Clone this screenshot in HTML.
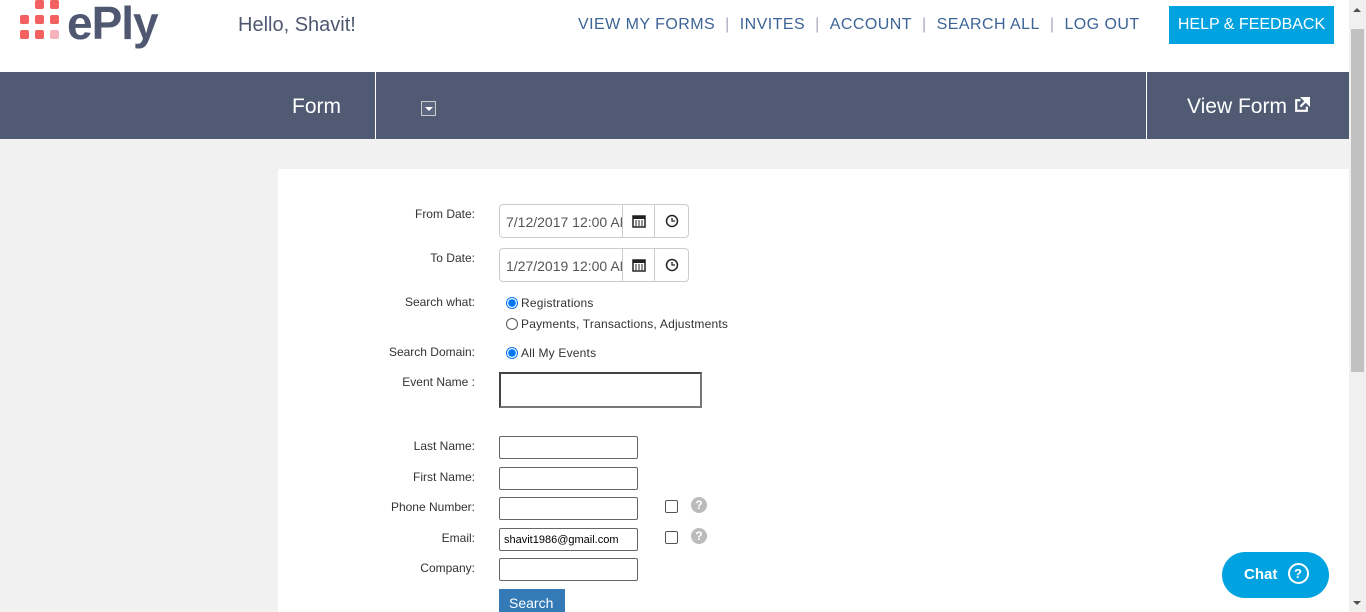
<!DOCTYPE html>
<html style="overflow:hidden;height:612px"><head><meta charset="utf-8"><style>
*{box-sizing:border-box;margin:0;padding:0}
body{width:1366px;height:612px;overflow:hidden;background:#f0f1f0;font-family:"Liberation Sans",sans-serif;position:relative}
.top{position:absolute;left:0;top:0;width:1349px;height:72px;background:#fff}
.dot{position:absolute;width:9px;height:9px;border-radius:2px;background:#f26060}
.logo{position:absolute;left:67px;top:-4px;font-size:46px;font-weight:bold;color:#4f5870;letter-spacing:-1px}
.hello{position:absolute;left:238px;top:14px;font-size:20px;color:#4f5870}
.nav{position:absolute;top:16px;left:578px;font-size:16px;color:#3d6497;letter-spacing:.45px;white-space:nowrap}
.nav span.s{color:#aab;margin:0 10px}
.help{position:absolute;left:1169px;top:6px;width:165px;height:38px;background:#00a2df;color:#fff;font-size:16px;text-align:center;line-height:38px}
.bar{position:absolute;left:0;top:72px;width:1349px;height:67px;background:#505a72;color:#fff}
.bar .t{position:absolute;font-size:21px;top:23px}
.vl{position:absolute;top:0;width:1px;height:67px;background:#fff}
.panel{position:absolute;left:278px;top:169px;width:1071px;height:443px;background:#fff}
.lbl{position:absolute;font-size:12px;color:#333;text-align:right;width:200px;left:275px}
.inp{position:absolute;left:499px;width:139px;height:23px;border:1px solid #666;border-radius:2px;background:#fff;font-size:11px;padding:5px 4px;color:#000}
.dt{position:absolute;left:499px;width:190px;height:34px;border:1px solid #ccc;border-radius:4px;display:flex}
.dt .v{width:124px;border-right:1px solid #ccc;font-size:14px;color:#555;padding:9px 6px;white-space:nowrap;overflow:hidden}
.dt .b{width:33px;border-right:1px solid #ccc;display:flex;align-items:center;justify-content:center}
.dt .b:last-child{border:none}
.rad{position:absolute;left:506px;font-size:12px;color:#333;display:flex;align-items:center;letter-spacing:.2px}
.rad i{display:inline-block;width:12px;height:12px;border-radius:50%;border:1px solid #555;margin-right:3px}
.rad i.on{border:1px solid #0075ff;background:radial-gradient(circle,#0075ff 0 3.5px,#fff 4px)}
.cb{position:absolute;left:665px;width:13px;height:13px;border:1px solid #555;border-radius:2px}
.q{position:absolute;left:691px;width:16px;height:16px;border-radius:50%;background:#bbb;color:#fff;font-size:12px;font-weight:bold;text-align:center;line-height:16px}
.sb{position:absolute;right:0;top:0;width:17px;height:612px;background:#f0f0f0}
</style></head><body>
<div class="top">
<div class="dot" style="left:35px;top:0"></div><div class="dot" style="left:50px;top:0"></div>
<div class="dot" style="left:20px;top:15px"></div><div class="dot" style="left:35px;top:15px"></div><div class="dot" style="left:50px;top:15px"></div>
<div class="dot" style="left:20px;top:30px"></div><div class="dot" style="left:35px;top:30px"></div><div class="dot" style="left:50px;top:30px;background:#f7b3bb"></div>
<div class="logo">ePly</div>
<div class="hello">Hello, Shavit!</div>
<div class="nav">VIEW MY FORMS<span class="s">|</span>INVITES<span class="s">|</span>ACCOUNT<span class="s">|</span>SEARCH ALL<span class="s">|</span>LOG OUT</div>
<div class="help">HELP &amp; FEEDBACK</div>
</div>
<div class="bar">
<div class="t" style="left:292px">Form</div>
<div class="vl" style="left:375px"></div>
<div style="position:absolute;left:421px;top:29px;width:15px;height:15px;border:1px solid #ccc;background:#5e6780"><div style="margin:5px auto 0;width:0;height:0;border-left:4px solid transparent;border-right:4px solid transparent;border-top:4px solid #fff"></div></div>
<div class="vl" style="left:1146px"></div>
<div class="t" style="left:1187px">View Form <svg width="17" height="17" viewBox="0 0 16 16" style="vertical-align:-1px"><path d="M7 3H3v10h10V9" fill="none" stroke="#fff" stroke-width="2"/><path d="M9 1h6v6zM14 2L7 9" stroke="#fff" stroke-width="2" fill="#fff"/></svg></div>
</div>
<div class="panel"></div>
<div class="lbl" style="top:207px">From Date:</div>
<div class="dt" style="top:204px"><div class="v">7/12/2017 12:00 AM</div><div class="b"><svg width="14" height="14" viewBox="0 0 14 14"><rect x="1" y="2" width="12" height="11" fill="none" stroke="#222" stroke-width="1.5"/><rect x="1" y="2" width="12" height="3" fill="#222"/><path d="M3 7h2M6 7h2M9 7h2M3 9h2M6 9h2M9 9h2M3 11h2M6 11h2M9 11h2" stroke="#222"/></svg></div><div class="b"><svg width="14" height="14" viewBox="0 0 14 14"><circle cx="7" cy="7" r="5.5" fill="none" stroke="#222" stroke-width="1.5"/><path d="M7 4v3h3" fill="none" stroke="#222" stroke-width="1.3"/></svg></div></div>
<div class="lbl" style="top:251px">To Date:</div>
<div class="dt" style="top:248px"><div class="v">1/27/2019 12:00 AM</div><div class="b"><svg width="14" height="14" viewBox="0 0 14 14"><rect x="1" y="2" width="12" height="11" fill="none" stroke="#222" stroke-width="1.5"/><rect x="1" y="2" width="12" height="3" fill="#222"/><path d="M3 7h2M6 7h2M9 7h2M3 9h2M6 9h2M9 9h2M3 11h2M6 11h2M9 11h2" stroke="#222"/></svg></div><div class="b"><svg width="14" height="14" viewBox="0 0 14 14"><circle cx="7" cy="7" r="5.5" fill="none" stroke="#222" stroke-width="1.5"/><path d="M7 4v3h3" fill="none" stroke="#222" stroke-width="1.3"/></svg></div></div>
<div class="lbl" style="top:295px">Search what:</div>
<div class="rad" style="top:296px"><i class="on"></i>Registrations</div>
<div class="rad" style="top:317px"><i></i>Payments, Transactions, Adjustments</div>
<div class="lbl" style="top:345px">Search Domain:</div>
<div class="rad" style="top:346px"><i class="on"></i>All My Events</div>
<div class="lbl" style="top:375px">Event Name :</div>
<div style="position:absolute;left:499px;top:372px;width:203px;height:36px;border:2px solid #444;border-right-color:#777;border-bottom-color:#777"></div>
<div class="lbl" style="top:439px">Last Name:</div><div class="inp" style="top:436px"></div>
<div class="lbl" style="top:470px">First Name:</div><div class="inp" style="top:467px"></div>
<div class="lbl" style="top:500px">Phone Number:</div><div class="inp" style="top:497px"></div>
<div class="cb" style="top:500px"></div><div class="q" style="top:497px">?</div>
<div class="lbl" style="top:531px">Email:</div><div class="inp" style="top:528px">shavit1986@gmail.com</div>
<div class="cb" style="top:531px"></div><div class="q" style="top:528px">?</div>
<div class="lbl" style="top:561px">Company:</div><div class="inp" style="top:558px"></div>
<div style="position:absolute;left:499px;top:589px;width:66px;height:23px;overflow:hidden;background:#337ab7;color:#fff;font-size:14px;padding:6px 10px">Search</div>
<div style="position:absolute;left:1222px;top:552px;width:107px;height:46px;border-radius:23px;background:#00a2df;color:#fff;font-weight:bold;font-size:15px;line-height:46px;padding-left:22px">Chat <span style="display:inline-block;width:21px;height:21px;border:2px solid #fff;border-radius:50%;text-align:center;line-height:17px;font-size:13px;margin-left:6px;vertical-align:1px">?</span></div>
<div class="sb"><div style="position:absolute;left:2px;top:29px;width:13px;height:343px;background:#c1c1c1"></div>
<div style="position:absolute;left:4px;top:8px;border-left:4px solid transparent;border-right:4px solid transparent;border-bottom:4px solid #505050"></div>
<div style="position:absolute;left:4px;top:601px;border-left:4px solid transparent;border-right:4px solid transparent;border-top:4px solid #505050"></div></div>
</body></html>
